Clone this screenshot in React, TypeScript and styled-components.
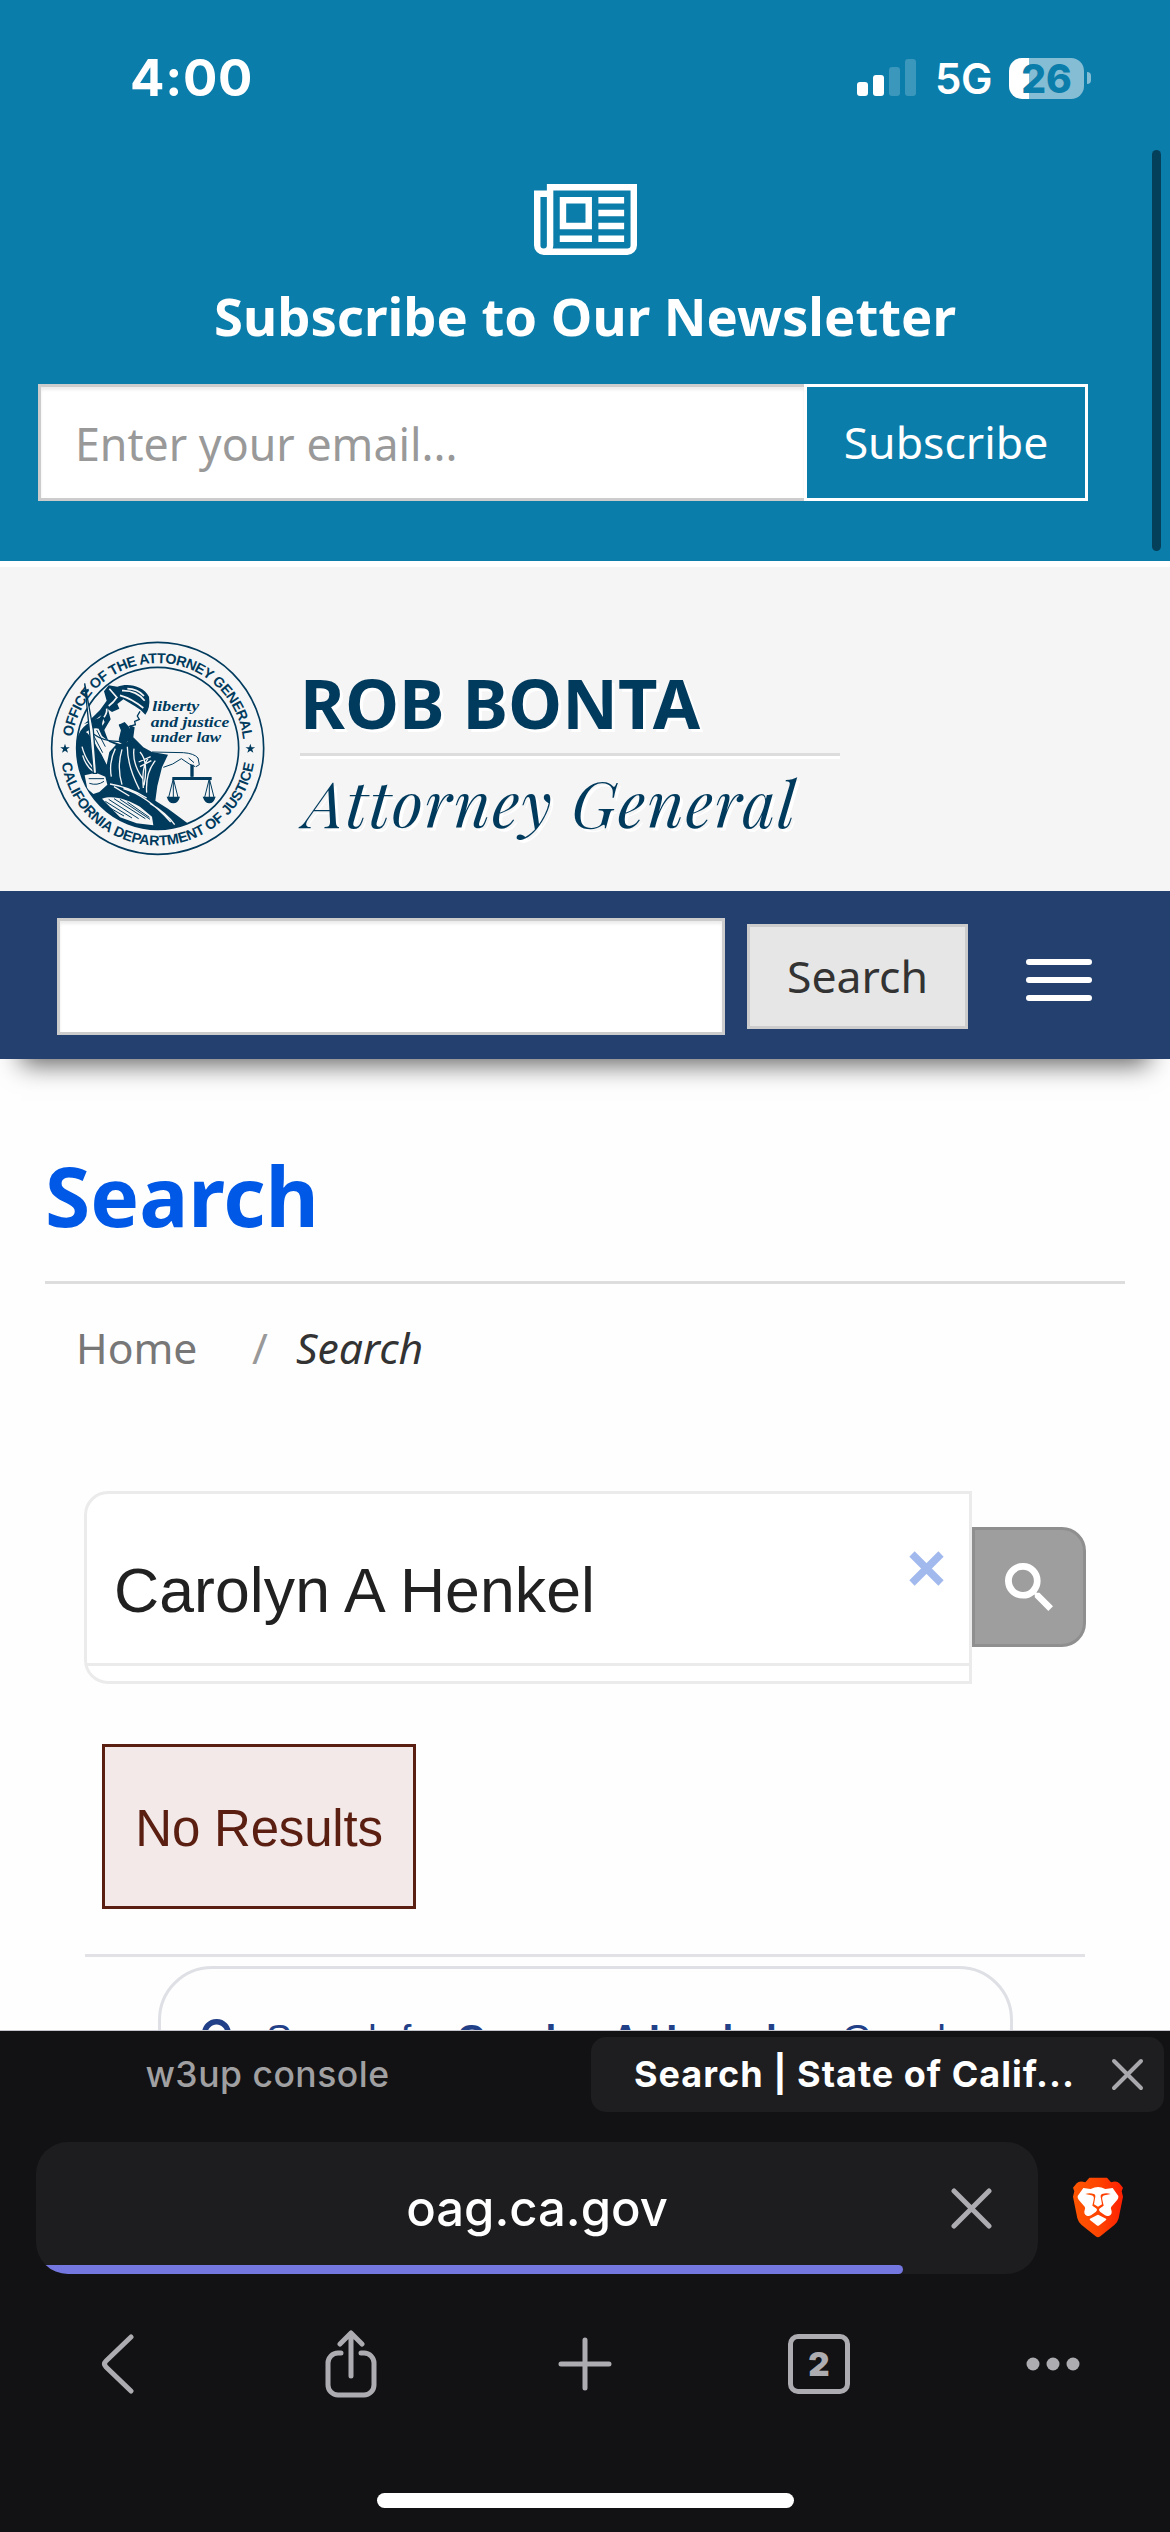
import React from "react";
import styled, { createGlobalStyle } from "styled-components";

const sans = `"Noto Sans", "Open Sans", sans-serif`;
const helvetica = `"Liberation Sans", Arial, sans-serif`;
const system = `Inter, "Liberation Sans", sans-serif`;

const Global = createGlobalStyle`
  * { box-sizing: border-box; }
  body { margin: 0; background: #fff; }
  h1, h2, p { margin: 0; }
  button, input { appearance: none; margin: 0; border-radius: 0; }
`;

const Screen = styled.div`
  position: relative;
  width: 1170px;
  height: 2532px;
  display: flex;
  flex-direction: column;
  overflow: hidden;
  background: #fff;
`;

/* ---------- status bar ---------- */
const StatusBar = styled.header`
  flex: none;
  height: 156px;
  display: flex;
  align-items: center;
  justify-content: space-between;
  padding: 0 79px 0 130px;
  background: #0b7daa;
  color: #fff;
  font-family: ${system};
`;
const Clock = styled.span`
  font-size: 51px;
  font-weight: 750;
  line-height: 60px;
  letter-spacing: 0.7px;
`;
const StatusIcons = styled.div`
  display: flex;
  align-items: center;
`;
const Network = styled.span`
  margin: 2px 18px 0 19px;
  width: 56px;
  font-size: 42px;
  font-weight: 600;
  line-height: 50px;
  letter-spacing: -0.4px;
`;
const Battery = styled.div`
  width: 75px;
  height: 41px;
  border-radius: 13px;
  display: flex;
  align-items: center;
  justify-content: center;
  background: linear-gradient(90deg, #fff 20px, #85bdd4 20px);
  color: #0b7daa;
  font-size: 39px;
  font-weight: 800;
`;
const BatteryNub = styled.div`
  width: 4px;
  height: 12px;
  margin-left: 3px;
  border-radius: 0 4px 4px 0;
  background: #85bdd4;
`;

/* ---------- newsletter ---------- */
const Newsletter = styled.section`
  flex: none;
  height: 405px;
  padding: 28px 38px 0;
  display: flex;
  flex-direction: column;
  align-items: center;
  background: #0b7daa;
`;
const NewsletterTitle = styled.h2`
  margin-top: 26px;
  color: #fff;
  font: 700 52.6px/70px ${sans};
  white-space: nowrap;
`;
const EmailForm = styled.form`
  align-self: flex-start;
  margin-top: 33px;
  width: 1050px;
  height: 117px;
  display: flex;
`;
const EmailInput = styled.input`
  width: 766px;
  height: 117px;
  padding: 2px 0 0 34px;
  border: 3px solid #ccc;
  border-right: 0;
  background: #fff;
  box-shadow: inset 0 3px 3px rgba(0, 0, 0, 0.075);
  font: 400 44.7px/60px ${sans};
  outline: none;
  &::placeholder {
    color: #999;
    opacity: 1;
  }
`;
const SubscribeButton = styled.button`
  width: 284px;
  height: 117px;
  padding: 0 0 2px;
  border: 3px solid #fff;
  background: #0b7daa;
  color: #fff;
  font: 400 44.6px/60px ${sans};
`;

/* ---------- site header ---------- */
const SiteHeader = styled.section`
  flex: none;
  height: 330px;
  border-top: 6px solid #fff;
  padding: 63px 0 0 40px;
  display: flex;
  gap: 20px;
  background: #f5f5f5;
  color: #003a5d;
`;
const Titles = styled.div`
  width: 540px;
  margin-top: 28px;
  display: flex;
  flex-direction: column;
`;
const OfficialName = styled.p`
  padding-bottom: 5px;
  font: 700 68.5px/90px ${sans};
  text-shadow: 3px 3px 0 #fff;
  border-bottom: 3px solid #ddd;
  box-shadow: 0 3px 0 #fff;
  white-space: nowrap;
`;
const OfficialRole = styled.p`
  margin: 6px 0 0 4px;
  font: italic 400 63.5px/80px "Playfair Display", "Liberation Serif", serif;
  font-feature-settings: "liga" 1, "clig" 1;
  letter-spacing: 1.8px;
  text-shadow: 3px 3px 0 #fff;
  white-space: nowrap;
`;

const NavBar = styled.nav`
  flex: none;
  position: relative;
  z-index: 1;
  height: 168px;
  padding: 3px 0 0 57px;
  display: flex;
  align-items: center;
  background: #24406e;
  box-shadow: 0 27px 24px -21px rgba(0, 0, 0, 0.6);
`;
const NavInput = styled.input`
  width: 668px;
  height: 117px;
  border: 3px solid #ccc;
  background: #fff;
  box-shadow: inset 0 3px 3px rgba(0, 0, 0, 0.075);
`;
const NavButton = styled.button`
  width: 221px;
  height: 105px;
  margin: 0 58px 0 22px;
  padding: 0 0 2px;
  border: 3px solid #ccc;
  background: #e6e6e6;
  color: #333;
  font: 400 44.6px/60px ${sans};
`;
const Burger = styled.div`
  margin-top: 7px;
  display: flex;
  flex-direction: column;
  gap: 12px;
`;
const BurgerLine = styled.div`
  width: 66px;
  height: 6px;
  border-radius: 3px;
  background: #fff;
`;

/* ---------- page ---------- */
const Main = styled.main`
  flex: none;
  height: 972px;
  padding: 81px 45px 0;
  overflow: hidden;
  background: #fefefe;
  border-bottom: 1px solid #c3c4cc;
`;
const PageTitle = styled.h1`
  padding-bottom: 31px;
  border-bottom: 3px solid #ddd;
  color: #0059e6;
  font: 700 82px/110px ${sans};
`;
const Breadcrumb = styled.div`
  margin: 34px 0 0 31px;
  display: flex;
  font: 400 42.7px/60px ${sans};
`;
const CrumbLink = styled.span`
  width: 176px;
  color: #777;
`;
const CrumbSlash = styled.span`
  width: 44px;
  color: #999;
`;
const CrumbCurrent = styled.span`
  color: #333;
  font-style: italic;
`;
const SearchRow = styled.div`
  margin: 113px 0 0 39px;
  display: flex;
`;
const SearchBox = styled.div`
  width: 888px;
  height: 193px;
  border: 3px solid #ebebeb;
  border-radius: 24px 0 0 24px;
  background: #fff;
`;
const SearchField = styled.div`
  height: 172px;
  padding: 0 25px 0 27px;
  border-bottom: 3px solid #ebebeb;
  display: flex;
  align-items: center;
  justify-content: space-between;
`;
const Query = styled.span`
  padding-top: 22px;
  color: #212121;
  font: 400 62.5px/80px ${helvetica};
  letter-spacing: 0.1px;
`;
const ClearIcon = styled.svg`
  margin-top: -21px;
`;
const SearchButton = styled.button`
  width: 114px;
  height: 120px;
  margin-top: 36px;
  padding: 0;
  display: flex;
  align-items: center;
  justify-content: center;
  border: 3px solid #8f8f8f;
  border-radius: 0 24px 24px 0;
  background: #9e9e9e;
`;
const NoResults = styled.div`
  margin: 60px 0 0 57px;
  width: 314px;
  height: 165px;
  padding-top: 5px;
  display: flex;
  align-items: center;
  justify-content: center;
  border: 3px solid #5b1f12;
  background: #f2e9e8;
  color: #5b1f12;
  font: 400 51px/60px ${helvetica};
  letter-spacing: -0.2px;
  white-space: nowrap;
`;
const Divider = styled.div`
  height: 3px;
  margin: 45px 40px 0;
  background: #e1e1e6;
`;
const GooglePill = styled.div`
  width: 855px;
  height: 145px;
  margin: 9px 0 0 113px;
  padding-left: 41px;
  border: 3px solid #dfe0e5;
  border-radius: 54px;
  display: flex;
  align-items: center;
  color: #224087;
  font: 400 39px/50px ${helvetica};
  white-space: pre;
`;
const PillText = styled.span`
  margin-left: 25px;
`;

const ScrollThumb = styled.div`
  position: absolute;
  z-index: 2;
  top: 150px;
  left: 1152px;
  width: 9px;
  height: 401px;
  border-radius: 5px;
  background: #05405a;
`;

/* ---------- browser chrome ---------- */
const BrowserBar = styled.footer`
  flex: 1;
  display: flex;
  flex-direction: column;
  background: #121214;
  font-family: ${system};
`;
const TabStrip = styled.div`
  padding: 6px 6px 0 0;
  display: flex;
  justify-content: space-between;
`;
const Tab = styled.div<{ $active?: boolean }>`
  width: ${(p) => (p.$active ? 573 : 535)}px;
  height: 75px;
  padding: ${(p) => (p.$active ? "0 20px 1px 43px" : "0 0 1px")};
  border-radius: 15px;
  display: flex;
  align-items: center;
  justify-content: ${(p) => (p.$active ? "space-between" : "center")};
  background: ${(p) => (p.$active ? "#1e1e20" : "transparent")};
  color: ${(p) => (p.$active ? "#fff" : "#a0a0a2")};
  font-size: ${(p) => (p.$active ? 36 : 35.5)}px;
  font-weight: ${(p) => (p.$active ? 700 : 500)};
  letter-spacing: ${(p) => (p.$active ? 1 : 0.5)}px;
  white-space: nowrap;
`;
const AddressRow = styled.div`
  margin: 30px 0 0 36px;
  display: flex;
  align-items: center;
`;
const AddressBox = styled.div`
  position: relative;
  overflow: hidden;
  width: 1002px;
  height: 132px;
  border-radius: 32px;
  display: grid;
  grid-template-columns: 134px 1fr 134px;
  align-items: center;
  justify-items: center;
  background: #1d1d1f;
  color: #fff;
  font-size: 49px;
  font-weight: 500;
`;
const Host = styled.span`
  grid-column: 2;
  padding-top: 2px;
  line-height: 60px;
`;
const Progress = styled.div`
  position: absolute;
  left: 0;
  bottom: 0;
  width: 867px;
  height: 9px;
  border-radius: 0 5px 5px 0;
  background: #7577e0;
`;
const BraveIcon = styled.svg`
  margin-left: 22px;
`;
const Toolbar = styled.div`
  height: 132px;
  margin-top: 24px;
  display: grid;
  grid-template-columns: repeat(5, 234px);
  align-items: center;
  justify-items: center;
`;
const TabCount = styled.div`
  width: 62px;
  height: 60px;
  border: 5px solid #adacb1;
  border-radius: 10px;
  display: flex;
  align-items: center;
  justify-content: center;
  color: #adacb1;
  font-size: 33px;
  font-weight: 900;
`;
const HomeIndicator = styled.div`
  align-self: center;
  width: 417px;
  height: 15px;
  margin-top: 63px;
  border-radius: 8px;
  background: #fff;
`;

const SignalBars = () => (
  <svg width="59" height="38" viewBox="0 0 59 38" fill="#fff">
    <rect x="0" y="23" width="11" height="14" rx="3" />
    <rect x="16" y="16" width="11" height="21" rx="3" />
    <rect x="32" y="8" width="11" height="29" rx="3" opacity=".2" />
    <rect x="48" y="0" width="11" height="37" rx="3" opacity=".2" />
  </svg>
);

const NewspaperIcon = () => (
  <svg width="103" height="71" viewBox="0 0 16 11" fill="#fff" fillRule="evenodd">
    <path d="M2 0H16V9.5A1.5 1.5 0 0 1 14.500 11H1.500A1.500 1.500 0 0 1 0 9.500V1H2ZM1 2V9.500a.5.5 0 0 0 1 0V2ZM3 1V9.500q0 .26-.1.500H14.500a.5.5 0 0 0 .5-.5V1Z" />
    <path d="M4 2H9V7H4ZM5 3V6H8V3ZM10 2h4v1h-4ZM10 4h4v1h-4ZM10 6h4v1h-4ZM10 8h4v1h-4ZM4 8h5v1H4Z" />
  </svg>
);

const STAR =
  "M0-15 3.500-4.600 14.500-4.600 5.600 1.800 9 12.500 0 6-9 12.500-5.600 1.800-14.500-4.600-3.500-4.600Z";

const Seal = () => (
  <svg width="240" height="240" viewBox="0 0 720 720" fill="#003a5d">
    <defs>
      <path id="arcTop" d="M97 325A258 258 0 0 1 609 325" />
      <path id="arcBottom" d="M64 396A292 292 0 0 0 642 396" />
      <clipPath id="disc">
        <circle cx="353" cy="355" r="243" />
      </clipPath>
    </defs>
    <g fill="none" stroke="#003a5d" strokeWidth="5">
      <circle cx="353" cy="355" r="318" />
      <circle cx="353" cy="355" r="243" />
    </g>
    <g fontFamily="Liberation Sans, sans-serif" fontWeight="700" fontSize="43">
      <text textLength="745" lengthAdjust="spacingAndGlyphs">
        <textPath href="#arcTop" startOffset="4" textLength="745">
          OFFICE OF THE ATTORNEY GENERAL
        </textPath>
      </text>
      <text textLength="825" lengthAdjust="spacingAndGlyphs">
        <textPath href="#arcBottom" startOffset="4" textLength="825">
          CALIFORNIA DEPARTMENT OF JUSTICE
        </textPath>
      </text>
    </g>
    <path d={STAR} transform="translate(75 356)" />
    <path d={STAR} transform="translate(631 356)" />
    <g
      fontFamily="Liberation Serif, serif"
      fontWeight="700"
      fontStyle="italic"
      fontSize="45"
    >
      <text x="337" y="243" textLength="141" lengthAdjust="spacingAndGlyphs">liberty</text>
      <text x="332" y="290" textLength="236" lengthAdjust="spacingAndGlyphs">and justice</text>
      <text x="332" y="337" textLength="211" lengthAdjust="spacingAndGlyphs">under law</text>
    </g>

    {/* robe and seat */}
    <g clipPath="url(#disc)">
      <path d="M108 345C112 300 140 275 178 264L196 240 186 282 204 330 240 342 262 336 270 286 284 292 280 322 310 352 336 366 384 374 366 412 352 468 346 512 384 536 446 582 400 610H200L108 480Z" />
      <path
        fill="#f5f5f5"
        d="M138 306C150 296 168 292 176 296L186 318 208 336 228 344 208 366 200 404 184 372 170 350 160 330ZM134 436 168 428 196 440 202 464 178 486 160 492 142 476ZM186 506C220 494 262 508 300 530L336 560 340 586 290 580 240 562Z"
      />
      <path
        fill="none"
        stroke="#f5f5f5"
        strokeWidth="4"
        d="M126 350q12 46 44 74M128 376q10 34 34 50M226 356q-20 40-12 84M246 358q-16 54 0 106M262 350q0 58 36 128M282 356q-6 44 26 90M300 366q26 30 12 100M324 386q-20 26-14 88M346 392q-30 36-26 96M300 410l34-18M296 396l36-16M210 462q60 10 110 42M250 476q70 20 142 100M330 520q50 30 74 64M222 470l46 28"
      />
      <path
        fill="none"
        stroke="#003a5d"
        strokeWidth="3"
        d="M142 310l34 60M154 304l34 64M170 300l26 50M146 446h46M148 460q24 8 44-6M196 514l80 50M206 508l90 58M222 506l94 60M240 508l90 60M200 528l52 30M262 516l66 46"
      />
    </g>

    {/* head, hair and blindfold */}
    <path d="M192 184 206 166 232 170C266 158 310 168 327 200Q332 232 316 254L302 240 284 228 250 208 232 222 238 236 216 246 204 238 212 268 202 284 188 308 180 300 194 276 184 256 162 272 132 282 158 262 180 240 200 212Z" />
    <path
      fill="none"
      stroke="#f5f5f5"
      strokeWidth="5"
      d="M240 196q36 10 70 38M246 182q42-2 68 30M208 176l22 26M206 228q14-10 26-28M192 262q10-14 8-26M262 176q30 0 50 22"
    />
    <path
      fill="none"
      stroke="#003a5d"
      strokeWidth="4"
      d="M300 244 292 258 298 268 284 274 286 284 266 290M238 284 246 296 238 330M160 312q34 24 78 22"
    />
    <path d="M236 284l18-8 14 16 8 24-22 30-18-10 8-32Z" />

    {/* sword */}
    <path fill="#f5f5f5" stroke="#003a5d" strokeWidth="4" d="M134 160 160 300 170 430 160 430 148 300Z" />
    <path d="M124 182l22-6v7l-22 6Z" />

    {/* arm and scales */}
    <path
      fill="none"
      stroke="#003a5d"
      strokeWidth="3"
      d="M336 366 430 368Q462 370 474 384L478 404 468 410M370 412 398 402 424 386 448 402 466 410M446 384 462 398M456 406V444M400 446 386 502M400 446 414 502M400 446V502M508 446 494 502M508 446 522 502M508 446V502"
    />
    <path d="M397 441H515V450H397ZM380 500H420Q414 520 400 520T380 500ZM488 500H527Q521 520 508 520T488 500ZM451 404h10v36h-10Z" />
  </svg>
);

const Cross = ({ size, color, weight }: { size: number; color: string; weight: number }) => (
  <svg width={size} height={size} viewBox={`0 0 ${size} ${size}`}>
    <path
      d={`M3 3 ${size - 3} ${size - 3}M${size - 3} 3 3 ${size - 3}`}
      stroke={color}
      strokeWidth={weight}
      strokeLinecap="round"
    />
  </svg>
);

const Magnifier = ({ size, color }: { size: number; color: string }) => (
  <svg width={size} height={size} viewBox="0 0 13 13" fill={color}>
    <path d="m4.8495 7.8226c0.82666 0 1.5262-0.29146 2.0985-0.87438 0.57232-0.58292 0.86378-1.2877 0.87438-2.1144 0.010599-0.82666-0.28086-1.5262-0.87438-2.0985-0.59352-0.57232-1.293-0.86378-2.0985-0.87438-0.8055-0.010599-1.5103 0.28086-2.1144 0.87438-0.60414 0.59352-0.8956 1.293-0.87438 2.0985 0.021197 0.8055 0.31266 1.5103 0.87438 2.1144 0.56172 0.60414 1.2665 0.8956 2.1144 0.87438zm4.4695 0.2115 3.681 3.6819-1.259 1.284-3.6817-3.7 0.0019784-0.69479-0.090043-0.098846c-0.87973 0.76087-1.92 1.1413-3.1207 1.1413-1.3553 0-2.5025-0.46363-3.4417-1.3909s-1.4088-2.0686-1.4088-3.4239c0-1.3553 0.4696-2.4966 1.4088-3.4239 0.9392-0.92727 2.0864-1.3969 3.4417-1.4088 1.3553-0.011889 2.4906 0.45771 3.406 1.4088 0.9154 0.95107 1.379 2.0924 1.3909 3.4239 0 1.2126-0.38043 2.2588-1.1413 3.1385l0.098834 0.090049z" />
  </svg>
);

const Brave = () => (
  <BraveIcon width="76" height="86" viewBox="0 0 228 258">
    <defs>
      <linearGradient id="flame">
        <stop offset="0" stopColor="#ff5601" />
        <stop offset=".5" stopColor="#ff4500" />
        <stop offset="1" stopColor="#ff1f01" />
      </linearGradient>
    </defs>
    <path
      fill="url(#flame)"
      d="M88 38H141L153 52Q170 46 178 55L189 68 185 79 189 95 176 160Q173 172 163 180L121 214Q114 220 107 214L65 180Q55 172 52 160L39 95 43 79 39 68 50 55Q58 46 76 52Z"
    />
    <g fill="#fff">
      <path d="M70 69 92 72Q104 66 114 66T136 72L158 69 175 93Q176 99 172 104L154 125Q151 129 154 135 158 147 148 152 141 155 135 151L120 140Q114 134 120 130L131 122 127 104Q124 93 134 91L152 87Q140 82 126 87 121 89 122 95L126 118 114 125 102 118 106 95Q107 89 102 87 88 82 76 87L94 91Q104 93 101 104L97 122 108 130Q114 134 108 140L93 151Q87 155 80 152 70 147 74 135 77 129 74 125L56 104Q52 99 53 93Z" />
      <path d="M90 161 112 150Q114 149 116 150L138 161Q140 163 138 165L118 181Q114 184 110 181L90 165Q88 163 90 161Z" />
    </g>
  </BraveIcon>
);

const stroke = {
  fill: "none",
  stroke: "#adacb1",
  strokeWidth: 5,
  strokeLinecap: "round" as const,
  strokeLinejoin: "round" as const,
};

export default function App() {
  return (
    <Screen>
      <Global />
      <StatusBar>
        <Clock>4:00</Clock>
        <StatusIcons>
          <SignalBars />
          <Network>5G</Network>
          <Battery>26</Battery>
          <BatteryNub />
        </StatusIcons>
      </StatusBar>

      <Newsletter>
        <NewspaperIcon />
        <NewsletterTitle>Subscribe to Our Newsletter</NewsletterTitle>
        <EmailForm>
          <EmailInput placeholder="Enter your email..." />
          <SubscribeButton type="button">Subscribe</SubscribeButton>
        </EmailForm>
      </Newsletter>

      <SiteHeader>
        <Seal />
        <Titles>
          <OfficialName>ROB BONTA</OfficialName>
          <OfficialRole>Attorney General</OfficialRole>
        </Titles>
      </SiteHeader>

      <NavBar>
        <NavInput />
        <NavButton>Search</NavButton>
        <Burger>
          <BurgerLine />
          <BurgerLine />
          <BurgerLine />
        </Burger>
      </NavBar>

      <Main>
        <PageTitle>Search</PageTitle>
        <Breadcrumb>
          <CrumbLink>Home</CrumbLink>
          <CrumbSlash>/</CrumbSlash>
          <CrumbCurrent>Search</CrumbCurrent>
        </Breadcrumb>
        <SearchRow>
          <SearchBox>
            <SearchField>
              <Query>Carolyn A Henkel</Query>
              <ClearIcon width="35" height="35" viewBox="0 0 35 35">
                <path d="M3 3 32 32M32 3 3 32" stroke="#a1b9ed" strokeWidth="7.500" />
              </ClearIcon>
            </SearchField>
          </SearchBox>
          <SearchButton>
            <Magnifier size={48} color="#fff" />
          </SearchButton>
        </SearchRow>
        <NoResults>No Results</NoResults>
        <Divider />
        <GooglePill>
          <Magnifier size={39} color="#224087" />
          <PillText>
            Search for <b>Carolyn A Henkel</b> on Google
          </PillText>
        </GooglePill>
      </Main>

      <BrowserBar>
        <TabStrip>
          <Tab>w3up console</Tab>
          <Tab $active>
            Search | State of Calif...
            <Cross size={33} color="#a9a9ad" weight={4} />
          </Tab>
        </TabStrip>
        <AddressRow>
          <AddressBox>
            <Host>oag.ca.gov</Host>
            <Cross size={41} color="#adacb1" weight={5} />
            <Progress />
          </AddressBox>
          <Brave />
        </AddressRow>
        <Toolbar>
          <svg width="33" height="62" viewBox="0 0 33 62">
            <path d="M30 4 5 28Q2 31 5 34L30 58" {...stroke} />
          </svg>
          <svg width="52" height="68" viewBox="0 0 52 68">
            <path
              d="M16 23H13A10 10 0 0 0 3 33V55A10 10 0 0 0 13 65H39A10 10 0 0 0 49 55V33A10 10 0 0 0 39 23H36M26 46V4M15 14 26 3 37 14"
              {...stroke}
            />
          </svg>
          <svg width="54" height="54" viewBox="0 0 54 54">
            <path d="M27 3V51M3 27H51" {...stroke} />
          </svg>
          <TabCount>2</TabCount>
          <svg width="54" height="14" viewBox="0 0 54 14" fill="#adacb1">
            <circle cx="7" cy="7" r="6.500" />
            <circle cx="27" cy="7" r="6.500" />
            <circle cx="47" cy="7" r="6.500" />
          </svg>
        </Toolbar>
        <HomeIndicator />
      </BrowserBar>
      <ScrollThumb />
    </Screen>
  );
}
